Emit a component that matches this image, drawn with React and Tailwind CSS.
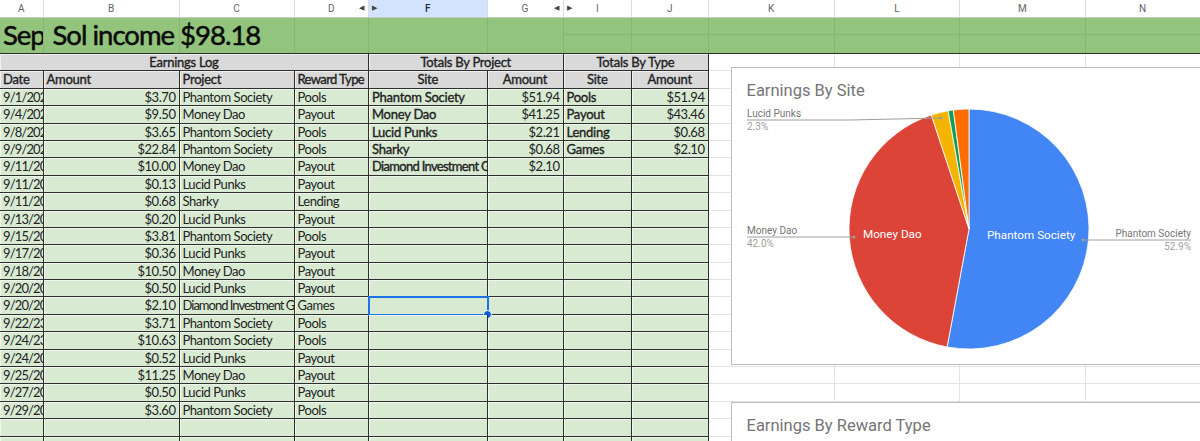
const columns = ["A", "B", "C", "D", "F", "G", "I", "J", "K", "L", "M", "N"]
const gridCols =
  "grid grid-cols-[43.5px_136px_115px_74.5px_118.5px_76px_68.5px_76.5px_126.5px_125px_125.5px_115px]"

const log = [
  ["9/1/2023", "$3.70", "Phantom Society", "Pools"],
  ["9/4/2023", "$9.50", "Money Dao", "Payout"],
  ["9/8/2023", "$3.65", "Phantom Society", "Pools"],
  ["9/9/2023", "$22.84", "Phantom Society", "Pools"],
  ["9/11/2023", "$10.00", "Money Dao", "Payout"],
  ["9/11/2023", "$0.13", "Lucid Punks", "Payout"],
  ["9/11/2023", "$0.68", "Sharky", "Lending"],
  ["9/13/2023", "$0.20", "Lucid Punks", "Payout"],
  ["9/15/2023", "$3.81", "Phantom Society", "Pools"],
  ["9/17/2023", "$0.36", "Lucid Punks", "Payout"],
  ["9/18/2023", "$10.50", "Money Dao", "Payout"],
  ["9/20/2023", "$0.50", "Lucid Punks", "Payout"],
  ["9/20/2023", "$2.10", "Diamond Investment Group", "Games"],
  ["9/22/23", "$3.71", "Phantom Society", "Pools"],
  ["9/24/23", "$10.63", "Phantom Society", "Pools"],
  ["9/24/2023", "$0.52", "Lucid Punks", "Payout"],
  ["9/25/2023", "$11.25", "Money Dao", "Payout"],
  ["9/27/2023", "$0.50", "Lucid Punks", "Payout"],
  ["9/29/2023", "$3.60", "Phantom Society", "Pools"],
  ["", "", "", ""],
  ["", "", "", ""],
]

const byProject = [
  ["Phantom Society", "$51.94"],
  ["Money Dao", "$41.25"],
  ["Lucid Punks", "$2.21"],
  ["Sharky", "$0.68"],
  ["Diamond Investment Group", "$2.10"],
]

const byType = [
  ["Pools", "$51.94"],
  ["Payout", "$43.46"],
  ["Lending", "$0.68"],
  ["Games", "$2.10"],
]

const slices = [
  { color: "#4285f4", from: 0, to: 190.5 },
  { color: "#db4437", from: 190.5, to: 341.7 },
  { color: "#f4b400", from: 341.7, to: 350 },
  { color: "#0f9d58", from: 350, to: 352.5 },
  { color: "#ff6d01", from: 352.5, to: 360 },
]

const green = "bg-[#d9ead3] shadow-[inset_1px_1px_0_#f0f6ed]"
const gray = "bg-[#d9d9d9] shadow-[inset_1px_1px_0_#efefef]"
// Lato's real bold runs much wider than the sheet's font
const heavy = "[-webkit-text-stroke:0.35px_#222]"

function slicePath(from, to) {
  const cx = 969
  const cy = 229
  const r = 120
  const point = (deg) => {
    const a = (deg * Math.PI) / 180
    return `${(cx + r * Math.sin(a)).toFixed(2)} ${(cy - r * Math.cos(a)).toFixed(2)}`
  }
  const large = to - from > 180 ? 1 : 0
  return `M${cx} ${cy}L${point(from)}A${r} ${r} 0 ${large} 1 ${point(to)}Z`
}

function Cell({ children, className = "", tracking = "tracking-[-0.45px]" }) {
  return (
    <div
      className={`overflow-hidden whitespace-nowrap border-r border-b border-[#2e2e2e] px-[3px] text-[13px] leading-[16px] text-[#222] ${tracking} ${className}`}
    >
      {children}
    </div>
  )
}

function HeaderCell({ children, className = "", tracking = "tracking-[-0.25px]" }) {
  return (
    <Cell className={`${gray} ${heavy} ${className}`} tracking={tracking}>
      {children}
    </Cell>
  )
}

function DataRow({ row, project, type, selected }) {
  const long = row[2].length > 20
  const longProject = project && project[0].length > 20
  return (
    <>
      <Cell className={green} tracking="tracking-[-0.85px]">{row[0]}</Cell>
      <Cell className={`${green} text-right`}>{row[1]}</Cell>
      <Cell className={green} tracking={long ? "tracking-[-1px]" : "tracking-[-0.45px]"}>{row[2]}</Cell>
      <Cell className={green}>{row[3]}</Cell>
      <div className="relative">
        <Cell className={`${green} ${heavy} h-full`} tracking={longProject ? "tracking-[-0.7px]" : "tracking-[-0.25px]"}>{project?.[0]}</Cell>
        {selected && (
          <div className="absolute -top-px -left-px -right-px -bottom-px border-2 border-[#1a73e8]">
            <span className="absolute -right-[5px] -bottom-[5px] h-[9px] w-[9px] rounded-full border border-white bg-[#0b5ed7]" />
          </div>
        )}
      </div>
      <Cell className={`${green} text-right`}>{project?.[1]}</Cell>
      <Cell className={`${green} ${heavy}`} tracking="tracking-[-0.25px]">{type?.[0]}</Cell>
      <Cell className={`${green} text-right`}>{type?.[1]}</Cell>
      <BlankCells />
    </>
  )
}

function BlankCells() {
  return (
    <>
      <div className="border-r border-b border-[#e2e3e3]" />
      <div className="border-r border-b border-[#e2e3e3]" />
      <div className="border-r border-b border-[#e2e3e3]" />
      <div className="border-b border-[#e2e3e3]" />
    </>
  )
}

function ColumnHeaders() {
  return (
    <div className={`${gridCols} h-[18px] border-b border-[#c7c7c7] font-['Roboto',sans-serif] text-[10px] text-[#5f6368]`}>
      {columns.map((c) => (
        <div
          key={c}
          className={`relative flex items-center justify-center border-r border-[#dadce0] ${c === "F" ? "bg-[#d3e3fd] font-medium text-[#1f2a44]" : ""}`}
        >
          {c}
          {(c === "D" || c === "G") && <span className="absolute right-[4px] text-[7px] text-[#444]">◀</span>}
          {(c === "F" || c === "I") && <span className="absolute left-[3px] text-[7px] text-[#444]">▶</span>}
        </div>
      ))}
    </div>
  )
}

function TitleRow() {
  return (
    <div className={`${gridCols} h-[35px] bg-[#93c47d] font-['Lato',sans-serif] text-[27.5px] leading-[34px] tracking-[-1px] text-[#0b0b0b] [-webkit-text-stroke:0.5px_#0b0b0b]`}>
      {columns.map((c, i) => (
        <div key={c} className={`border-r border-[#86b572] whitespace-nowrap ${c === "A" ? "overflow-hidden pl-[3px]" : ""} ${c === "B" ? "pl-[9px]" : ""}`}>
          {c === "A" && "Sep"}
          {c === "B" && "Sol income $98.18"}
          {i >= 6 && <div className="h-[17px] border-b border-[#86b572]" />}
        </div>
      ))}
    </div>
  )
}

function ChartCard({ title, className = "", children }) {
  return (
    <div className={`absolute left-[731px] w-[470px] border-[1.5px] border-[#bdbdbd] bg-white font-['Roboto',sans-serif] ${className}`}>
      <h2 className="pt-[12.5px] pl-[14.5px] text-[16.5px] leading-[20px] text-[#757575]">{title}</h2>
      {children}
    </div>
  )
}

function SitePie() {
  return (
    <svg className="absolute -left-[1.5px] -top-[1.5px]" width="470" height="298" viewBox="731 67 470 298" fontFamily="Roboto, sans-serif">
      {slices.map((s) => (
        <path key={s.color} d={slicePath(s.from, s.to)} fill={s.color} stroke="#fff" strokeWidth="0.8" />
      ))}
      <g stroke="#9e9e9e" strokeWidth="1" fill="none">
        <path d="M747 120H850L941 118" />
        <path d="M747 237H854" />
        <path d="M1083 240H1191" />
      </g>
      <g fill="#9e9e9e">
        <circle cx="941" cy="118" r="1.5" />
        <circle cx="854" cy="237" r="1.5" />
        <circle cx="1083" cy="240" r="1.5" />
      </g>
      <g fontSize="10" fill="#757575">
        <text x="747" y="117">Lucid Punks</text>
        <text x="747" y="234">Money Dao</text>
        <text x="1191" y="236.5" textAnchor="end">Phantom Society</text>
      </g>
      <g fontSize="10" fill="#9e9e9e">
        <text x="747" y="130">2.3%</text>
        <text x="747" y="247">42.0%</text>
        <text x="1191" y="250" textAnchor="end">52.9%</text>
      </g>
      <g fontSize="11.7" fill="#fff">
        <text x="863" y="238">Money Dao</text>
        <text x="987" y="239">Phantom Society</text>
      </g>
    </svg>
  )
}

export default function App() {
  return (
    <div className="relative h-[441px] w-[1200px] overflow-hidden bg-white font-['Lato',sans-serif]">
      <ColumnHeaders />
      <TitleRow />

      <div className={`${gridCols} auto-rows-[17.4px] border-t border-[#2e2e2e]`}>
        <HeaderCell className="col-span-4 text-center">Earnings Log</HeaderCell>
        <HeaderCell className="col-span-2 text-center">Totals By Project</HeaderCell>
        <HeaderCell className="col-span-2 text-center">Totals By Type</HeaderCell>
        <BlankCells />

        <HeaderCell>Date</HeaderCell>
        <HeaderCell>Amount</HeaderCell>
        <HeaderCell>Project</HeaderCell>
        <HeaderCell tracking="tracking-[-0.6px]">Reward Type</HeaderCell>
        <HeaderCell className="text-center">Site</HeaderCell>
        <HeaderCell className="text-center">Amount</HeaderCell>
        <HeaderCell className="text-center">Site</HeaderCell>
        <HeaderCell className="text-center">Amount</HeaderCell>
        <BlankCells />

        {log.map((row, i) => (
          <DataRow key={i} row={row} project={byProject[i]} type={byType[i]} selected={i === 12} />
        ))}
      </div>

      <ChartCard title="Earnings By Site" className="top-[67px] h-[298px]">
        <SitePie />
      </ChartCard>
      <ChartCard title="Earnings By Reward Type" className="top-[402px] h-[60px]" />
    </div>
  )
}
